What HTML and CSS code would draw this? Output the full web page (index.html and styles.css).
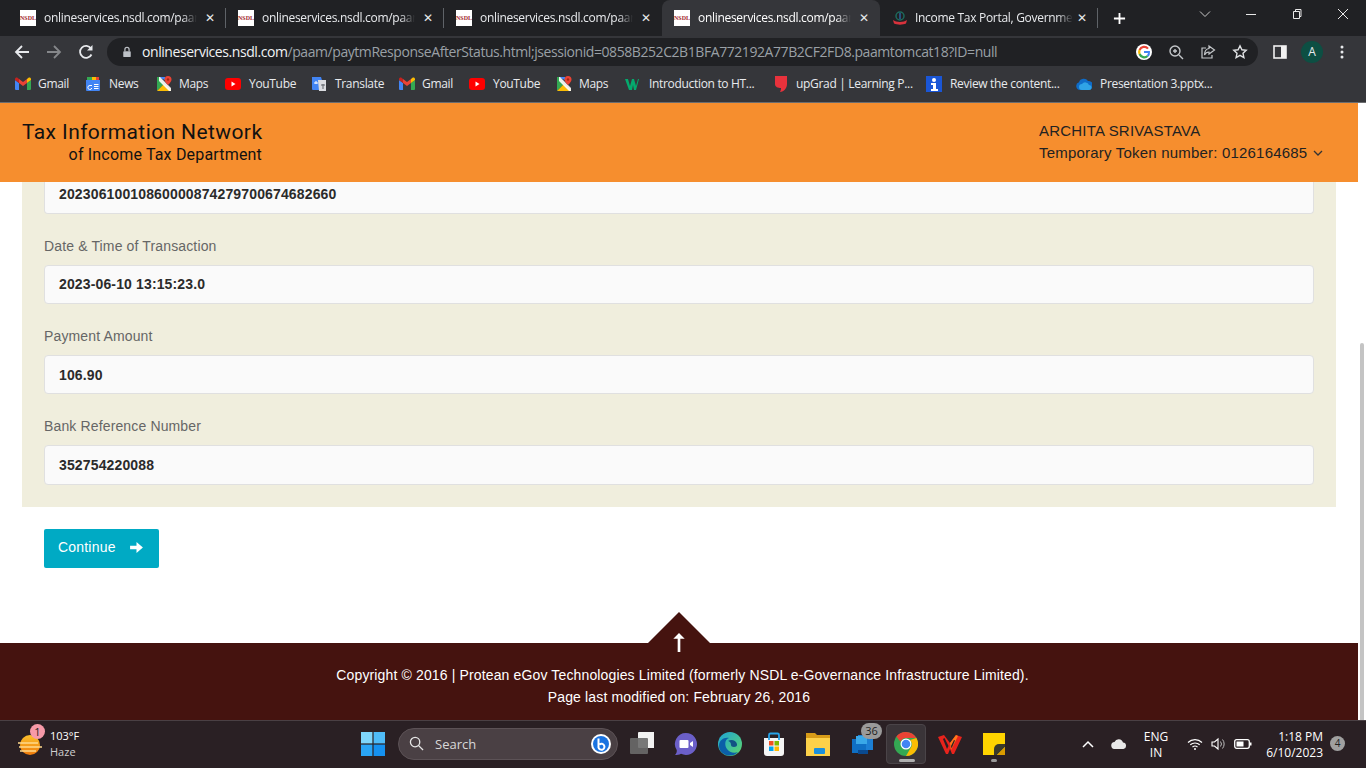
FILE: index.html
```html
<!DOCTYPE html>
<html lang="en">
<head>
<meta charset="utf-8">
<title>Payment Response</title>
<link rel="stylesheet" href="styles.css">
</head>
<body>
<svg class="defs" width="0" height="0">
  <defs>
    <symbol id="gmail" viewBox="0 0 16 14">
      <path fill="#4285f4" d="M1 13h3V6L0 3v9a1 1 0 0 0 1 1z"/>
      <path fill="#34a853" d="M12 13h3a1 1 0 0 0 1-1V3l-4 3z"/>
      <path fill="#fbbc04" d="M12 2v4l4-3V2c0-1.400-1.500-2-2.500-1.300z"/>
      <path fill="#ea4335" d="M4 6V2l4 3 4-3v4L8 9z"/>
      <path fill="#c5221f" d="M0 2v1l4 3V2L2.500.7C1.500 0 0 .6 0 2z"/>
    </symbol>
    <symbol id="maps" viewBox="0 0 16 16">
      <path fill="#34a853" d="M1 1h2l5 7-7 7z"/>
      <path fill="#fbbc04" d="M1 15l7-7 7 6v1z"/>
      <path fill="#4285f4" d="M3 1h6v3L4 2z"/>
      <path fill="#fff" d="M3 1h1l11 11v3h-2L3 5z" opacity=".9"/>
      <path fill="#ea4335" d="M12 0a3.500 3.500 0 0 0-3.500 3.500C8.500 6 12 9 12 9s3.500-3 3.500-5.500A3.500 3.500 0 0 0 12 0z"/>
      <circle cx="12" cy="3.500" r="1.200" fill="#a52714"/>
    </symbol>
    <symbol id="youtube" viewBox="0 0 16 12">
      <rect width="16" height="12" rx="3" fill="#f00"/>
      <path fill="#fff" d="M6.500 3.500v5L10.500 6z"/>
    </symbol>
  </defs>
</svg>

<div class="tabstrip">
  <div class="tab"><span class="fav">NSDL</span><span class="tab-title">onlineservices.nsdl.com/paam</span><span class="tab-x">✕</span></div>
  <div class="tab"><span class="fav">NSDL</span><span class="tab-title">onlineservices.nsdl.com/paam</span><span class="tab-x">✕</span></div>
  <div class="tab"><span class="fav">NSDL</span><span class="tab-title">onlineservices.nsdl.com/paam</span><span class="tab-x">✕</span></div>
  <div class="tab active"><span class="fav">NSDL</span><span class="tab-title">onlineservices.nsdl.com/paam</span><span class="tab-x">✕</span></div>
  <div class="tab last">
    <svg class="tab-icon" viewBox="0 0 16 16"><path fill="#d8323c" d="M1 10c3 2.500 11 2.500 14 0l-1 3.500c-3 1.500-9 1.500-12 0z"/><circle cx="8" cy="6" r="4" fill="#202124" stroke="#1d6a5c" stroke-width="1.500"/><path stroke="#2d5fa0" stroke-width="1.500" d="M8 3v6"/></svg>
    <span class="tab-title">Income Tax Portal, Governme</span><span class="tab-x">✕</span>
  </div>
  <svg class="new-tab" viewBox="0 0 14 14"><path stroke="#fff" stroke-width="2" d="M7 1v12M1 7h12"/></svg>
  <div class="win-controls">
    <svg viewBox="0 0 12 12"><path fill="none" stroke="#c8c8c8" d="M1 3.500l5 5 5-5"/></svg>
    <svg viewBox="0 0 12 12"><path stroke="#e8e8e8" d="M1 6.500h10"/></svg>
    <svg viewBox="0 0 12 12"><path fill="none" stroke="#e8e8e8" d="M2.500 3.500h6v7h-6zM4.500 3.500v-2h5.500v7H8.500"/></svg>
    <svg viewBox="0 0 12 12"><path stroke="#e8e8e8" d="M1 1l10 10M11 1L1 11"/></svg>
  </div>
</div>

<div class="toolbar">
  <svg class="nav" viewBox="0 0 16 16"><path fill="none" stroke="#e8eaed" stroke-width="1.800" d="M15 8H2M8 2L2 8l6 6"/></svg>
  <svg class="nav" viewBox="0 0 16 16"><path fill="none" stroke="#85878a" stroke-width="1.800" d="M1 8h13M8 2l6 6-6 6"/></svg>
  <svg class="nav" viewBox="0 0 16 16"><path fill="none" stroke="#e8eaed" stroke-width="1.800" d="M13.500 10.500A6 6 0 1 1 13 4.500"/><path fill="#e8eaed" d="M14.500 1v5.500H9z"/></svg>
  <div class="omnibox">
    <svg class="lock" viewBox="0 0 12 14"><path fill="none" stroke="#bdc1c6" stroke-width="1.500" d="M3.500 6V4a2.500 2.500 0 0 1 5 0v2"/><rect x="1.500" y="6" width="9" height="7" rx="1" fill="#bdc1c6"/></svg>
    <span class="url"><span class="url-host">onlineservices.nsdl.com</span>/paam/paytmResponseAfterStatus.html;jsessionid=0858B252C2B1BFA772192A77B2CF2FD8.paamtomcat18?ID=null</span>
    <svg class="omni-icon" viewBox="0 0 16 16"><circle cx="8" cy="8" r="8" fill="#fff"/><path fill="none" stroke="#ea4335" stroke-width="2.200" d="M12 4.600A5 5 0 0 0 3.600 6"/><path fill="none" stroke="#fbbc04" stroke-width="2.200" d="M3.600 6a5 5 0 0 0 0 4"/><path fill="none" stroke="#34a853" stroke-width="2.200" d="M3.600 10a5 5 0 0 0 8 2"/><path fill="none" stroke="#4285f4" stroke-width="2" d="M8 8h5a5 5 0 0 1-1.400 4"/></svg>
    <svg class="omni-icon" viewBox="0 0 16 16"><circle cx="7" cy="7" r="5" fill="none" stroke="#c4c7ca" stroke-width="1.400"/><path stroke="#c4c7ca" stroke-width="1.400" d="M5 7h4M7 5v4M11 11l4 4"/></svg>
    <svg class="omni-icon" viewBox="0 0 16 16"><path fill="none" stroke="#c4c7ca" stroke-width="1.200" d="M6 4H2v10h10v-3"/><path fill="none" stroke="#c4c7ca" stroke-width="1.200" d="M9 2l5.500 4L9 10V8C7 8 5.500 9 4.500 11 4.500 7.500 6 5 9 4.500z"/></svg>
    <svg class="omni-icon" viewBox="0 0 16 16"><path fill="none" stroke="#e0e2e4" stroke-width="1.400" d="M8 1.800l1.900 4 4.300.5-3.200 3 .9 4.300L8 11.400l-3.900 2.200.9-4.300-3.200-3 4.300-.5z"/></svg>
  </div>
  <svg class="side-panel" viewBox="0 0 14 14"><rect x="1" y="1" width="12" height="12" fill="none" stroke="#f1f1f1" stroke-width="1.600"/><rect x="8" y="1" width="5" height="12" fill="#f1f1f1"/></svg>
  <span class="avatar">A</span>
  <svg class="menu-dots" viewBox="0 0 4 14"><circle cx="2" cy="2" r="1.500" fill="#e8eaed"/><circle cx="2" cy="7" r="1.500" fill="#e8eaed"/><circle cx="2" cy="12" r="1.500" fill="#e8eaed"/></svg>
</div>

<div class="bookmarks">
  <a class="bm w-gmail"><svg viewBox="0 0 16 14"><use href="#gmail"/></svg>Gmail</a>
  <a class="bm w-news"><svg viewBox="0 0 16 16"><path fill="#34a853" d="M2 1h6v4H2z"/><path fill="#fbbc04" d="M7 1h5v4H7z"/><path fill="#ea4335" d="M11 1h3v4h-3z"/><path fill="#4285f4" d="M1 4h14v10a1 1 0 0 1-1 1H2a1 1 0 0 1-1-1z"/><path fill="none" stroke="#fff" d="M7 9.500H5a2 2 0 1 0 1.800 2.500M9 8.500h4.500M9 10.500h4.500M9 12.500h4.500"/></svg>News</a>
  <a class="bm w-maps"><svg viewBox="0 0 16 16"><use href="#maps"/></svg>Maps</a>
  <a class="bm w-yt"><svg viewBox="0 0 16 12"><use href="#youtube"/></svg>YouTube</a>
  <a class="bm w-translate"><svg viewBox="0 0 16 16"><path fill="#4285f4" d="M1 1h9l4 13H2a1 1 0 0 1-1-1z"/><path fill="#dadce0" d="M7 4h8v11H8z"/><path stroke="#fff" d="M3 7h4M5 5v3"/><path stroke="#5f6368" d="M10 9h4M12 8v5"/></svg>Translate</a>
  <a class="bm w-gmail2"><svg viewBox="0 0 16 14"><use href="#gmail"/></svg>Gmail</a>
  <a class="bm w-yt2"><svg viewBox="0 0 16 12"><use href="#youtube"/></svg>YouTube</a>
  <a class="bm w-maps2"><svg viewBox="0 0 16 16"><use href="#maps"/></svg>Maps</a>
  <a class="bm w-w3"><svg viewBox="0 0 16 12"><path fill="#04aa6d" d="M0 1h3l2 7 2-7h2l2 7 2-7h1l-3 11H9L8 7l-1 5H4z"/></svg>Introduction to HT...</a>
  <a class="bm w-upgrad"><svg viewBox="0 0 16 16"><path fill="#e8323c" d="M2 0h12v8c0 4-3 8-7 8 1-2 1-3 1-4-3 0-6-1-6-4z"/></svg>upGrad | Learning P...</a>
  <a class="bm w-review"><svg viewBox="0 0 16 16"><rect width="16" height="16" fill="#1a56d6"/><circle cx="8" cy="4" r="2" fill="#fff"/><path fill="#fff" d="M5 7h5v6h2v2H5v-2h2V9H5z"/></svg>Review the content...</a>
  <a class="bm"><svg viewBox="0 0 16 12"><path fill="#0f6cc8" d="M4 12a4 4 0 0 1-1-7.800A5 5 0 0 1 12 3a4.500 4.500 0 0 1 1 9z"/><path fill="#2fa3e6" d="M6 12a3 3 0 0 1 0-6 4 4 0 0 1 7 1 2.500 2.500 0 0 1 0 5z"/></svg>Presentation 3.pptx...</a>
</div>

<div class="viewport">
  <div class="page">
    <header class="site-head">
      <div class="logo">
        <div class="logo-main">Tax Information Network</div>
        <div class="logo-sub">of Income Tax Department</div>
      </div>
      <div class="user">
        <div>ARCHITA SRIVASTAVA</div>
        <div>Temporary Token number: 0126164685 <svg class="caret" viewBox="0 0 10 6"><path fill="none" stroke="#333" stroke-width="1.300" d="M1 1l4 4 4-4"/></svg></div>
      </div>
    </header>

    <main class="content">
      <section class="panel">
        <div class="value first">20230610010860000874279700674682660</div>
        <label class="field-label">Date &amp; Time of Transaction</label>
        <div class="value">2023-06-10 13:15:23.0</div>
        <label class="field-label">Payment Amount</label>
        <div class="value low">106.90</div>
        <label class="field-label">Bank Reference Number</label>
        <div class="value tall">352754220088</div>
      </section>
      <button class="btn-continue">Continue <svg viewBox="0 0 14 12"><path fill="#fff" d="M0 4h7V0l7 6-7 6V8H0z"/></svg></button>
    </main>

    <footer class="site-foot">
      <div class="to-top"><svg viewBox="0 0 12 20"><path fill="#fff" d="M6 0l6 6H7.400v14H4.600V6H0z"/></svg></div>
      <p class="copy">Copyright © 2016 | Protean eGov Technologies Limited (formerly NSDL e-Governance Infrastructure Limited).</p>
      <p>Page last modified on: February 26, 2016</p>
    </footer>
  </div>
  <div class="scrollbar"><div class="thumb"></div></div>
</div>

<div class="taskbar">
  <div class="weather">
    <svg class="sun" viewBox="0 0 24 24"><defs><linearGradient id="sung" x1="0" y1="0" x2="0" y2="1"><stop offset="0" stop-color="#fbc02d"/><stop offset="1" stop-color="#ef7a0a"/></linearGradient></defs><circle cx="12" cy="12" r="10" fill="url(#sung)"/><path stroke="#ffd98a" stroke-width="1.300" d="M0 10h20M1 14h23M2 18h16"/></svg>
    <span class="weather-badge">1</span>
    <div class="weather-text"><div>103°F</div><div class="dim">Haze</div></div>
  </div>
  <div class="task-center">
    <svg class="tb-icon start" viewBox="0 0 24 24"><rect width="11.400" height="11.400" fill="#7fd6fb"/><rect x="12.600" width="11.400" height="11.400" fill="#4fbcf8"/><rect y="12.600" width="11.400" height="11.400" fill="#2aa5f5"/><rect x="12.600" y="12.600" width="11.400" height="11.400" fill="#1591f0"/></svg>
    <div class="search">
      <svg class="search-glass" viewBox="0 0 16 16"><circle cx="6.500" cy="6.500" r="5" fill="none" stroke="#e6e6e6" stroke-width="1.400"/><path stroke="#e6e6e6" stroke-width="1.400" d="M10 10l5 5"/></svg>
      <span>Search</span>
      <svg class="bing" viewBox="0 0 20 20"><circle cx="10" cy="10" r="10" fill="#fff"/><circle cx="10" cy="10" r="8" fill="#1a73e0"/><path fill="none" stroke="#fff" stroke-width="2" d="M7.500 4.500v9a3 3 0 1 0 1-3"/></svg>
    </div>
    <svg class="tb-icon" viewBox="0 0 24 24"><rect x="8" y="0" width="17" height="16" rx="1" fill="#f2f2f2"/><rect y="6" width="18" height="16" rx="1" fill="#6a6a6a" opacity=".9"/></svg>
    <svg class="tb-icon" viewBox="0 0 24 24"><path fill="#6b5fc8" d="M12 1a11 11 0 1 1-5 20.800C5 23 3 23 1 23c1.500-1.500 2-3 1.700-5A11 11 0 0 1 12 1z"/><rect x="5.500" y="8" width="9" height="8" rx="1" fill="#fff"/><path fill="#fff" d="M16 11l3-2v6l-3-2z"/></svg>
    <svg class="tb-icon" viewBox="0 0 24 24"><defs><linearGradient id="edgeg" x1="0" y1="0" x2="1" y2="1"><stop offset="0" stop-color="#1da3d8"/><stop offset="1" stop-color="#5fd86a"/></linearGradient></defs><circle cx="12" cy="12" r="12" fill="url(#edgeg)"/><path fill="#0b5fa8" d="M1 14C1 8 6 5 11 6c-4 1-5 7-2 11 2 3 7 5 11 3-6 7-19 3-19-6z"/><path fill="#0a3f80" d="M10 9c3-2 8-1 9 3 .5 2-1 3-3 3s-3-1-3-2c0-3-2-4-3-4z" opacity=".85"/></svg>
    <svg class="tb-icon" viewBox="0 0 24 24"><path fill="#f5f5f5" d="M2 6h20v15a3 3 0 0 1-3 3H5a3 3 0 0 1-3-3z"/><path fill="none" stroke="#27a3e8" stroke-width="1.800" d="M7 8V3a1.500 1.500 0 0 1 1.500-1.500h7A1.500 1.500 0 0 1 17 3v5"/><rect x="7" y="9" width="4.500" height="4.500" fill="#f25022"/><rect x="12.500" y="9" width="4.500" height="4.500" fill="#7fba00"/><rect x="7" y="14.500" width="4.500" height="4.500" fill="#00a4ef"/><rect x="12.500" y="14.500" width="4.500" height="4.500" fill="#ffb900"/></svg>
    <svg class="tb-icon" viewBox="0 0 24 24"><path fill="#d79b18" d="M0 1h9l2 2h13v6H0z"/><path fill="#fcd14a" d="M0 6h24v18H0z"/><rect x="8" y="16" width="11" height="6" rx="1" fill="#1a8fdc"/></svg>
    <div class="tb-badged">
      <svg class="tb-icon" viewBox="0 0 24 24"><rect x="8" y="3" width="15" height="15" fill="#1c7fd4"/><rect x="2" y="7" width="14" height="14" fill="#0f6fc4"/><rect x="6" y="4" width="11" height="8" fill="#39a8e8"/><path fill="#0a4a90" d="M8 18h10v4H8z"/></svg>
      <span class="count-badge">36</span>
    </div>
    <div class="tb-active">
      <svg class="tb-icon" viewBox="0 0 24 24"><circle cx="12" cy="12" r="12" fill="#34a853"/><path fill="#ea4335" d="M12 0a12 12 0 0 1 10.400 6H12a6 6 0 0 0-5.600 3.800L2.400 4.400A12 12 0 0 1 12 0z"/><path fill="#fbbc04" d="M22.400 6A12 12 0 0 1 12 24l5.200-9A6 6 0 0 0 16 8z"/><circle cx="12" cy="12" r="5.500" fill="#fff"/><circle cx="12" cy="12" r="4.300" fill="#4285f4"/></svg>
    </div>
    <svg class="tb-icon" viewBox="0 0 24 24"><path fill="#e8231c" d="M0 5l6-2 6 8 6-8 6 2-8 17h-2l-2-5-2 5H8z"/><path fill="#ff7a1a" d="M12 11l6-8 2 1-7 14z"/><path fill="#2a2024" d="M5 7l1.500-1 4 8-1.500 3zM13 14l3-6 1 .5-3.500 8z"/></svg>
    <div class="tb-sticky">
      <svg class="tb-icon" viewBox="0 0 24 24"><path fill="#ffd400" d="M1 1h22v22H1z"/><path fill="#3a3a2a" d="M23 12v3l-8 8h-3v-6a5 5 0 0 1 5-5z"/><path fill="#d99b00" d="M23 15v8h-8z"/></svg>
    </div>
  </div>
  <div class="tray">
    <svg class="tray-chev" viewBox="0 0 12 8"><path fill="none" stroke="#fff" stroke-width="1.500" d="M1 7l5-5 5 5"/></svg>
    <svg class="tray-cloud" viewBox="0 0 16 10"><path fill="#e8e8e8" d="M4 10a3.500 3.500 0 0 1-.5-7A4.500 4.500 0 0 1 12 3.500 3.300 3.300 0 0 1 12.500 10z"/></svg>
    <div class="lang"><div>ENG</div><div>IN</div></div>
    <svg class="tray-wifi" viewBox="0 0 16 12"><path fill="none" stroke="#fff" stroke-width="1.200" d="M1 4.500a10 10 0 0 1 14 0M3.300 6.800a7 7 0 0 1 9.400 0M5.500 9a4 4 0 0 1 5 0"/><circle cx="8" cy="11" r="1" fill="#fff"/></svg>
    <svg class="tray-vol" viewBox="0 0 16 14"><path fill="none" stroke="#fff" stroke-width="1.100" d="M1 5v4h2.500L7 12V2L3.500 5z"/><path fill="none" stroke="#bbb" d="M9.500 4.500a4 4 0 0 1 0 5M11.500 2.500a7 7 0 0 1 0 9"/></svg>
    <svg class="tray-batt" viewBox="0 0 18 12"><rect x=".7" y="1.700" width="14.600" height="8.600" rx="2" fill="none" stroke="#fff" stroke-width="1.300"/><rect x="2.500" y="3.500" width="7" height="5" fill="#fff"/><rect x="16" y="4.500" width="1.500" height="3" fill="#fff"/></svg>
    <div class="clock"><div>1:18 PM</div><div>6/10/2023</div></div>
    <span class="notif">4</span>
  </div>
</div>
</body>
</html>
```
FILE: styles.css
```css
*{box-sizing:border-box;}
html,body{margin:0;padding:0;height:100%;overflow:hidden;}
body{width:1366px;height:768px;display:flex;flex-direction:column;font-family:"Liberation Sans",Arial,sans-serif;background:#fff;}
.defs{display:block;height:0;}

/* browser chrome */
.tabstrip{height:36px;background:#202124;display:flex;align-items:center;padding-left:8px;flex:none;}
.tab{width:218px;height:36px;display:flex;align-items:center;padding-left:12px;position:relative;color:#e8eaed;font:12px/16px "Open Sans",sans-serif;letter-spacing:-.3px;}
.tab::after{content:"";position:absolute;right:0;top:8px;height:20px;width:1px;background:#5f6368;}
.tab.active{background:#35363a;border-radius:8px 8px 0 0;color:#fff;}
.tab.active::after,.tab:nth-child(3)::after{display:none;}
.fav{width:16px;height:16px;background:#fff;color:#a3262a;font:bold 6px/16px "Liberation Serif",serif;letter-spacing:0;text-align:center;flex:none;overflow:hidden;}
.tab-icon{width:18px;height:16px;flex:none;margin-left:-1px;}
.tab-title{margin-left:8px;white-space:nowrap;-webkit-mask-image:linear-gradient(90deg,#000 86%,transparent 95%);}
.tab-x{position:absolute;left:197px;font-size:12px;color:#e8eaed;letter-spacing:0;}
.tab.last .tab-title{margin-left:6px;-webkit-mask-image:linear-gradient(90deg,#000 90%,transparent);}
.new-tab{width:13px;height:13px;margin-left:15px;flex:none;}
.win-controls{margin-left:auto;display:flex;width:184px;justify-content:space-around;margin-top:-8px;}
.win-controls svg{width:12px;height:12px;}

.toolbar{height:32px;background:#35363a;display:flex;align-items:center;padding-left:14px;flex:none;}
.nav{width:16px;height:16px;margin-right:16px;flex:none;}
.nav:nth-child(3){margin-right:13px;}
.omnibox{width:1151px;height:28px;background:#202124;border-radius:14px;display:flex;align-items:center;padding:0 10px 0 15px;margin-right:0;}
.lock{width:10px;height:12px;flex:none;}
.url{margin-left:10px;color:#9aa0a6;font:14px/20px "Open Sans",sans-serif;letter-spacing:-.43px;white-space:nowrap;flex:1;overflow:hidden;}
.url-host{color:#f1f3f4;}
.omni-icon{width:16px;height:16px;margin-left:16px;flex:none;}
.side-panel{width:14px;height:14px;margin-left:15px;flex:none;}
.avatar{width:22px;height:22px;border-radius:50%;background:#0d4f43;color:#e8eaed;font:12px/22px "Open Sans",sans-serif;text-align:center;margin-left:14px;flex:none;}
.menu-dots{width:4px;height:14px;margin-left:17px;flex:none;}

.bookmarks{height:35px;background:#35363a;border-bottom:1px solid #6b6d70;display:flex;align-items:center;padding:0 0 2px 15px;flex:none;color:#e8eaed;font:12px/16px "Open Sans",sans-serif;letter-spacing:-.32px;}
.bm{display:flex;align-items:center;white-space:nowrap;}
.bm svg{width:16px;height:16px;margin-right:8px;flex:none;}
.w-gmail{width:70px;}
.w-gmail svg,.w-maps svg,.w-maps2 svg,.w-gmail2 svg{margin-right:7px;}
.w-news{width:71px;}
.w-maps{width:69px;}
.w-yt{width:86px;}
.w-translate{width:88px;}
.w-gmail2{width:70px;}
.w-yt2{width:87px;}
.w-maps2{width:69px;}
.w-w3{width:148px;}
.w-upgrad{width:153px;}
.w-upgrad svg{margin-right:7px;}
.w-review{width:150px;}

/* page */
.viewport{flex:1;display:flex;min-height:0;}
.page{width:1358px;display:flex;flex-direction:column;letter-spacing:.14px;}
.scrollbar{width:8px;background:#fff;display:flex;flex-direction:column;justify-content:flex-end;padding:0 2px 0 2px;}
.thumb{height:377px;background:#c4c4c4;border-radius:2px 2px 0 0;}

.site-head{height:79px;background:#f68e2e;display:flex;justify-content:space-between;color:#222;flex:none;}
.logo{margin:17px 0 0 22px;width:240px;text-align:right;color:#111;font-family:Roboto,sans-serif;}
.logo-main{font-size:21px;line-height:25px;letter-spacing:.4px;white-space:nowrap;}
.logo-sub{font-size:16px;line-height:19px;letter-spacing:.18px;white-space:nowrap;}
.user{width:319px;padding-top:17px;font-size:15px;line-height:22px;letter-spacing:.2px;color:#222;}
.caret{width:10px;height:6px;margin-left:1px;vertical-align:2px;}

.content{flex:1;padding:0 22px;}
.panel{width:1314px;height:325px;background:#f0eedd;padding:0 22px;}
.value{height:39px;background:#fafafa;border:1px solid #e0e0e0;border-radius:4px;padding-left:14px;font-size:14px;font-weight:bold;line-height:37px;color:#2b2b2b;}
.value.low{line-height:38px;}
.value.tall{height:40px;line-height:38px;}
.value.first{height:32px;line-height:25px;border-top:none;border-radius:0 0 4px 4px;}
.field-label{display:block;height:51px;padding-top:22px;font-size:14px;line-height:20px;color:#666;}
.btn-continue{display:flex;align-items:center;margin:22px 0 0 22px;width:115px;height:39px;padding:0 0 3px 14px;background:#00aac4;border:none;border-radius:2px;color:#fff;font:14px/20px "Liberation Sans",Arial,sans-serif;letter-spacing:.2px;}
.btn-continue svg{width:13px;height:11px;margin-left:14px;}

.site-foot{height:77px;background:#45130f;position:relative;color:#fff;text-align:center;padding-top:21px;font-size:14px;line-height:22px;flex:none;}
.site-foot p{margin:0;}
.site-foot .copy{padding-left:7px;}
.to-top{position:absolute;left:648px;top:-31px;width:62px;height:31px;}
.to-top::before{content:"";display:block;width:62px;height:31px;background:#45130f;clip-path:polygon(50% 0,100% 100%,0 100%);}
.to-top svg{position:absolute;left:25px;top:21px;width:12px;height:19px;}

/* taskbar */
.taskbar{height:48px;background:#2a2024;border-top:1px solid #4a4044;display:flex;align-items:center;position:relative;color:#fff;flex:none;padding-bottom:2px;font:12px/16px "Open Sans",sans-serif;}
.weather{width:361px;display:flex;align-items:center;padding-left:18px;position:relative;flex:none;}
.sun{width:24px;height:24px;margin-top:2px;}
.weather-badge{position:absolute;left:30px;top:-4px;width:15px;height:15px;border-radius:50%;background:#f79aa8;color:#222;font-size:11px;line-height:15px;text-align:center;}
.weather-text{margin-left:8px;font-size:11px;line-height:16px;}
.dim{color:#cfcfcf;}
.task-center{display:flex;align-items:center;flex:none;}
.tb-icon{width:24px;height:24px;flex:none;}
.search{width:220px;height:32px;background:#4a4044;border:1px solid #5c5256;border-radius:16px;display:flex;align-items:center;padding:0 6px 0 10px;color:#d8d8d8;font-size:13px;margin-right:2px;}
.search-glass{width:15px;height:15px;}
.search span{margin-left:11px;flex:1;}
.bing{width:20px;height:20px;}
.task-center > .tb-icon{margin-left:10px;margin-right:10px;}
.task-center > .tb-icon.start{margin-left:0;margin-right:13px;}
.tb-badged{position:relative;width:44px;display:flex;justify-content:center;}
.count-badge{position:absolute;left:21px;top:-9px;width:21px;height:16px;border-radius:8px;background:#9a9a9a;color:#222;font-size:11px;line-height:16px;text-align:center;}
.tb-active{width:40px;height:40px;background:#3a3438;border:1px solid #4a4448;border-radius:4px;display:flex;align-items:center;justify-content:center;position:relative;margin:0 2px;}
.tb-active::after{content:"";position:absolute;left:12px;bottom:1px;width:16px;height:3px;border-radius:2px;background:#b0b0b0;}
.tb-sticky{position:relative;width:44px;display:flex;justify-content:center;}
.tb-sticky::after{content:"";position:absolute;left:19px;bottom:-6px;width:6px;height:3px;border-radius:2px;background:#9a9a9a;}
.tray{margin-left:auto;display:flex;align-items:center;padding-right:21px;flex:none;}
.tray-chev{width:12px;height:8px;margin-right:17px;}
.tray-cloud{width:16px;height:10px;margin-right:9px;}
.lang{width:40px;padding-top:2px;text-align:center;font-size:12px;line-height:16px;margin-right:11px;}
.tray-wifi{width:16px;height:12px;margin-right:8px;}
.tray-vol{width:16px;height:14px;margin-right:7px;}
.tray-batt{width:18px;height:12px;margin-right:11px;}
.clock{width:60px;padding-top:2px;text-align:right;line-height:16px;font-size:12px;}
.notif{width:15px;height:15px;border-radius:50%;background:#a0a0a0;color:#222;font-size:10px;line-height:15px;text-align:center;margin-left:7px;}
```
